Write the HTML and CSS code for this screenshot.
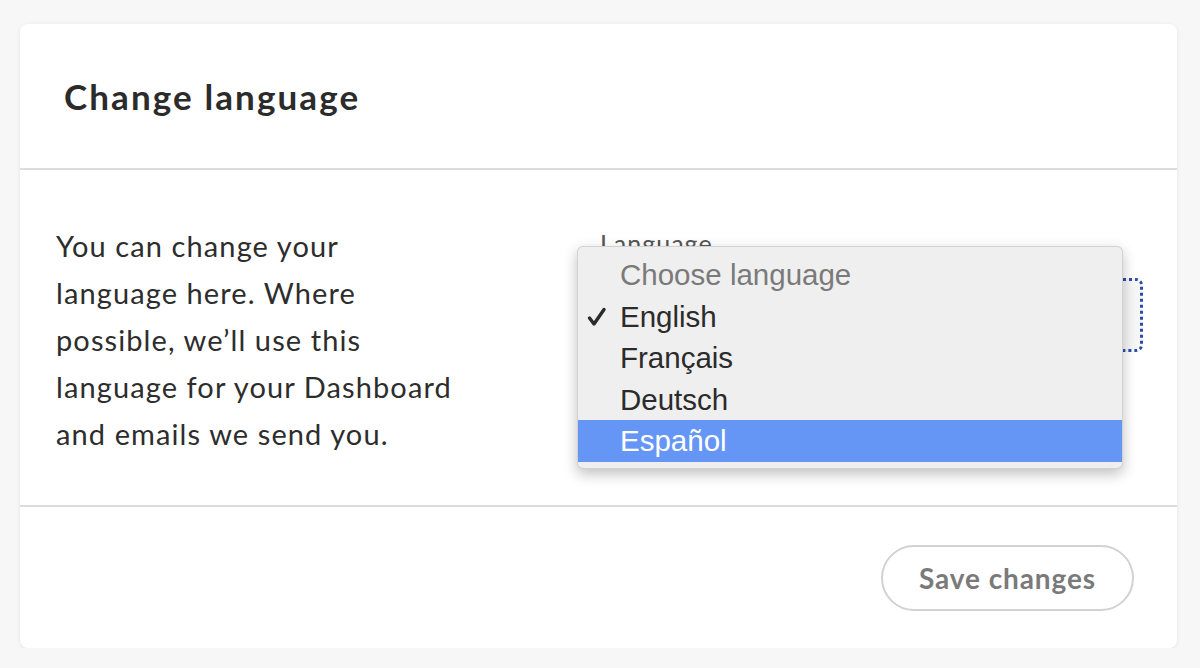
FILE: index.html
```html
<!DOCTYPE html>
<html lang="en">
<head>
    <meta charset="UTF-8">
    <meta name="viewport" content="width=device-width, initial-scale=1.0">
    <title>Change language</title>
    <link rel="stylesheet" href="styles.css">
</head>
<body>
    <div class="card">
        <div class="card-header">
            <h2>Change language</h2>
        </div>

        <div class="card-body">
            <p class="intro">
                You can change your<br>
                language here. Where<br>
                possible, we’ll use this<br>
                language for your Dashboard<br>
                and emails we send you.
            </p>

            <div class="field">
                <label for="language">Language</label>
                <div class="select" id="language"></div>

                <!-- open option list -->
                <ul class="menu">
                    <li class="placeholder">Choose language</li>
                    <li class="checked">
                        <svg class="check" width="20" height="20" viewBox="0 0 20 20">
                            <path d="M2.5 11 L7 17 L17 2.5" fill="none" stroke="#2b2b2b" stroke-width="3.4" stroke-linecap="round" stroke-linejoin="round"/>
                        </svg>
                        English
                    </li>
                    <li>Français</li>
                    <li>Deutsch</li>
                    <li class="active">Español</li>
                </ul>
            </div>
        </div>

        <div class="card-footer">
            <button type="button" class="button">Save changes</button>
        </div>
    </div>
</body>
</html>
```

FILE: styles.css
```css
* {
    margin: 0;
    padding: 0;
    box-sizing: border-box;
}

body {
    font-family: 'Lato', 'Open Sans', sans-serif;
    background: #f7f7f7;
    color: #2d2d2d;
}

.card {
    margin: 24px 23px 0 20px;
    height: 624px;
    background: white;
    border-radius: 8px;
    box-shadow: 0 1px 4px rgba(0, 0, 0, 0.08);
    display: flex;
    flex-direction: column;
}

.card-header {
    height: 146px;
    padding-left: 44px;
    display: flex;
    align-items: center;
    border-bottom: 2px solid #dcdcdc;
}

.card-header h2 {
    font-size: 35px;
    font-weight: 700;
    color: #2b2b2b;
    letter-spacing: 2.1px;
}

.card-body {
    display: grid;
    grid-template-columns: 1fr 543px;
    padding: 52px 34px 48px 36px;
    border-bottom: 2px solid #dcdcdc;
}

.intro {
    font-size: 29px;
    line-height: 47px;
    letter-spacing: 1.1px;
    color: #2d2d2d;
}

.field {
    position: relative;
    padding-top: 6px;
}

.field label {
    display: block;
    font-size: 25px;
    letter-spacing: 1px;
    color: #555;
    height: 50px;
}

.select {
    height: 74px;
    border: 3px dotted #2a4ea8;
    border-radius: 7px;
    background: #f6f6f6;
}

.menu {
    position: absolute;
    left: -23px;
    top: 24px;
    width: 546px;
    list-style: none;
    padding: 7px 0 6px;
    background: #efefef;
    border: 1px solid rgba(0, 0, 0, 0.12);
    border-radius: 6px;
    box-shadow: 0 5px 14px rgba(0, 0, 0, 0.25);
    font-family: 'Liberation Sans', Arial, sans-serif;
    font-size: 29.5px;
}

.menu li {
    position: relative;
    height: 41.5px;
    line-height: 41.5px;
    padding-left: 42px;
    color: #2b2b2b;
}

.menu .placeholder {
    color: #7a7a7a;
}

.menu .active {
    background: #6596f5;
    color: white;
}

.check {
    position: absolute;
    left: 9px;
    top: 11px;
}

.card-footer {
    flex: 1;
    display: flex;
    justify-content: flex-end;
    align-items: center;
    padding-right: 43px;
}

.button {
    width: 253px;
    height: 66px;
    border: 2px solid #d2d2d2;
    border-radius: 33px;
    background: white;
    color: #7a7a7a;
    font-family: 'Lato', 'Open Sans', sans-serif;
    font-size: 28px;
    font-weight: 700;
    letter-spacing: 0.9px;
    cursor: pointer;
}
```
